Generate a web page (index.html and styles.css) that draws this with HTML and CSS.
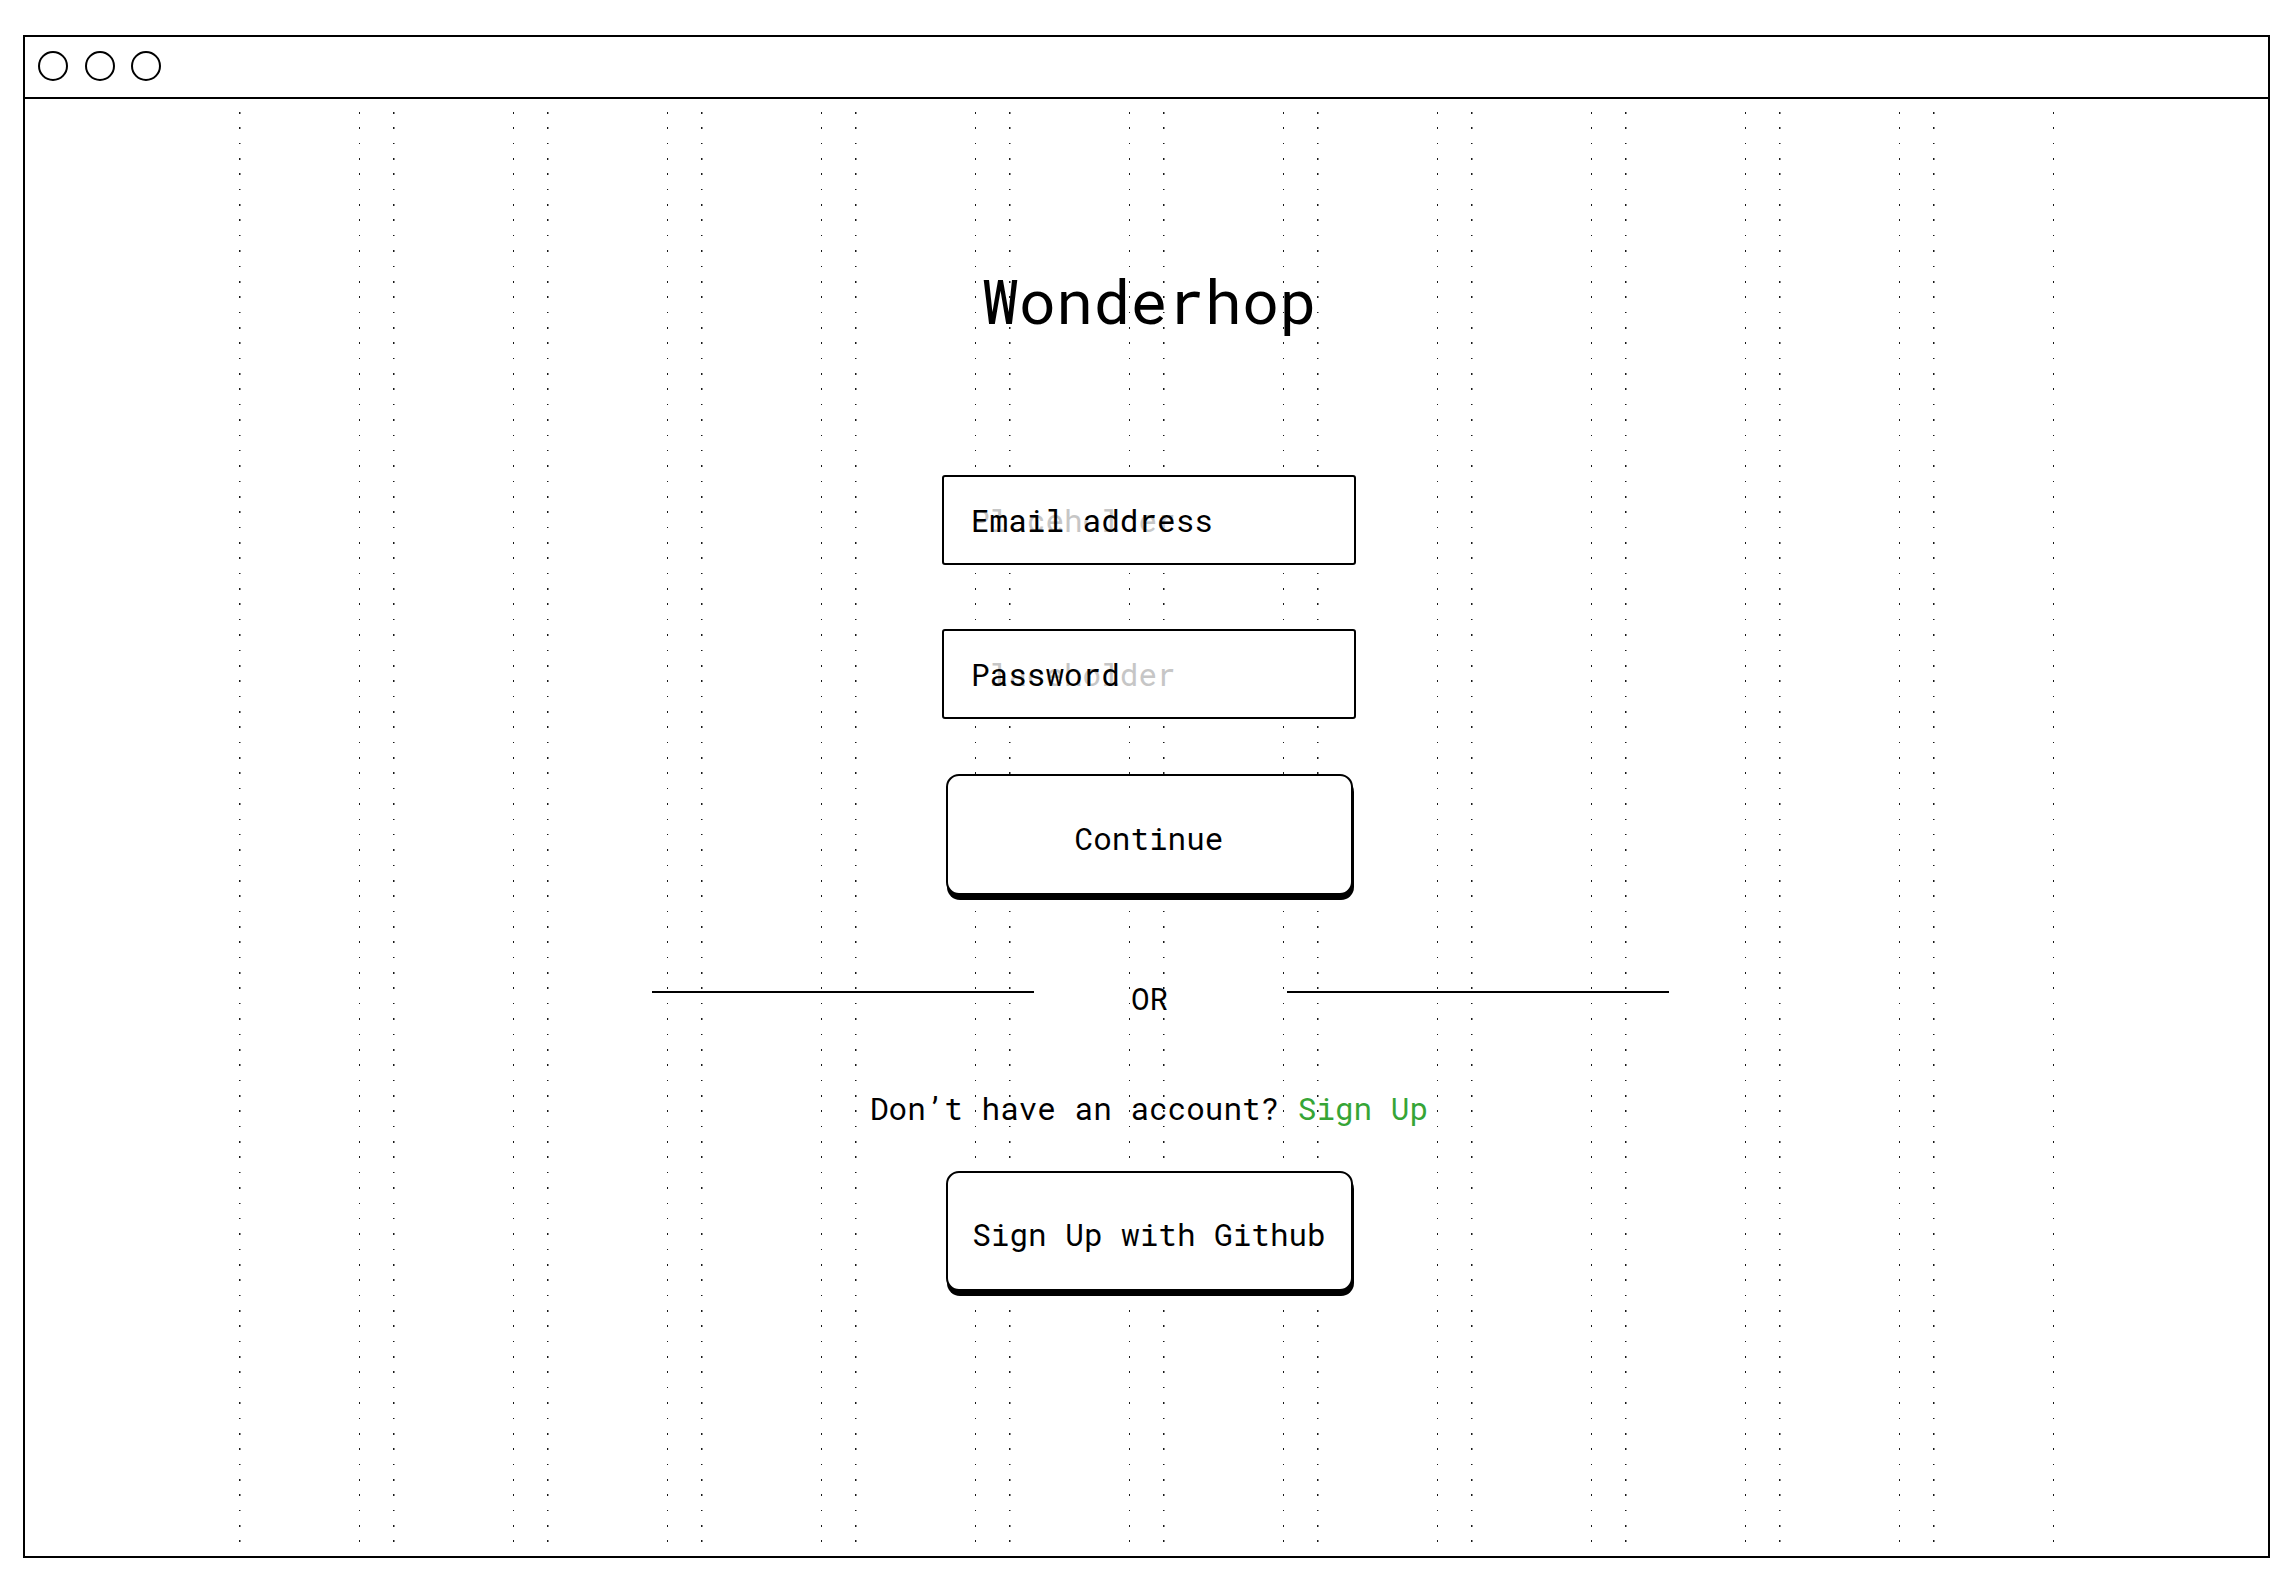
FILE: index.html
```html
<!DOCTYPE html>
<html lang="en">
<head>
<meta charset="utf-8">
<title>Wonderhop – Sign in</title>
<link rel="stylesheet" href="styles.css">
</head>
<body>
<div class="window">
  <div class="titlebar">
    <span class="light"></span>
    <span class="light"></span>
    <span class="light"></span>
  </div>
  <div class="content">
    <div class="columns" aria-hidden="true">
      <div class="col"></div><div class="col"></div><div class="col"></div><div class="col"></div>
      <div class="col"></div><div class="col"></div><div class="col"></div><div class="col"></div>
      <div class="col"></div><div class="col"></div><div class="col"></div><div class="col"></div>
    </div>
    <main class="form">
      <h1 class="brand">Wonderhop</h1>
      <div class="field field-email">
        <span class="ph">Placeholder</span>
        <span class="lbl">Email address</span>
      </div>
      <div class="field field-password">
        <span class="ph">Placeholder</span>
        <span class="lbl">Password</span>
      </div>
      <button class="btn btn-continue" type="button">Continue</button>
      <div class="divider">
        <span class="rule"></span>
        <span class="or">OR</span>
        <span class="rule"></span>
      </div>
      <p class="signup">Don’t have an account? <a class="signup-link" href="#">Sign Up</a></p>
      <button class="btn btn-github" type="button">Sign Up with Github</button>
    </main>
  </div>
</div>
</body>
</html>
```

FILE: styles.css
```css
html, body {
  margin: 0;
  padding: 0;
  background: #fff;
}

body {
  font-family: "Roboto Mono", "DejaVu Sans Mono", monospace;
  color: #000;
}

.window {
  box-sizing: border-box;
  width: 2247px;
  height: 1523px;
  margin: 35px 0 0 23px;
  border: 2px solid #000;
  display: flex;
  flex-direction: column;
}

.titlebar {
  box-sizing: border-box;
  height: 62px;
  flex: none;
  border-bottom: 2px solid #000;
  display: flex;
  align-items: center;
  gap: 16.5px;
  padding: 0 0 2px 13px;
}

.light {
  box-sizing: border-box;
  width: 30px;
  height: 30px;
  border: 2px solid #000;
  border-radius: 50%;
}

.content {
  flex: 1;
  display: grid;
  min-height: 0;
}

.columns,
.form {
  grid-area: 1 / 1;
}

.columns {
  display: grid;
  grid-template-columns: repeat(12, 1fr);
  column-gap: 32.6px;
  padding: 0 214px;
}

.col {
  background-image:
    repeating-linear-gradient(to bottom, #1a1a1a 0 1.6px, transparent 1.6px 15.36px),
    repeating-linear-gradient(to bottom, #1a1a1a 0 1.6px, transparent 1.6px 15.36px);
  background-size: 1.5px 100%, 1.5px 100%;
  background-repeat: no-repeat;
  background-position: left 0 top -2.4px, right 0 top -2.4px;
}

.form {
  display: flex;
  flex-direction: column;
  align-items: center;
  padding: 160px 0 0 5px;
}

.brand {
  margin: 0;
  font-size: 62px;
  font-weight: 400;
  line-height: 82px;
  height: 82px;
}

.field {
  box-sizing: border-box;
  width: 414px;
  height: 90px;
  border: 2px solid #000;
  border-radius: 3px;
  background: #fff;
  display: grid;
  align-items: center;
  padding: 0 0 0 27px;
  font-size: 31px;
  line-height: 36px;
}

.field-email {
  margin-top: 134px;
}

.field-password {
  margin-top: 64px;
}

.ph,
.lbl {
  grid-area: 1 / 1;
  white-space: pre;
}

.ph {
  color: #c6c6c6;
}

.lbl {
  color: #000;
}

.btn {
  box-sizing: border-box;
  width: 407px;
  border: 2px solid #000;
  border-radius: 13px;
  background: #fff;
  box-shadow: 1px 5px 0 #000;
  font-family: inherit;
  font-size: 31px;
  line-height: 36px;
  color: #000;
  padding: 6px 0 0;
  display: flex;
  align-items: center;
  justify-content: center;
  white-space: pre;
}

.btn-continue {
  margin-top: 55px;
  height: 121px;
}

.divider {
  margin: 85px 0 0 23px;
  width: 1017px;
  height: 36px;
  display: flex;
  align-items: flex-start;
}

.rule {
  flex: none;
  width: 382px;
  height: 2px;
  margin-top: 11px;
  background: #000;
}

.or {
  flex: none;
  box-sizing: border-box;
  width: 253px;
  padding-left: 97px;
  font-size: 31px;
  line-height: 36px;
}

.signup {
  margin: 73.5px 0 0;
  font-size: 31px;
  line-height: 36px;
  white-space: pre;
}

.signup-link {
  color: #36a536;
  text-decoration: none;
}

.btn-github {
  margin-top: 45px;
  height: 120px;
}
```
